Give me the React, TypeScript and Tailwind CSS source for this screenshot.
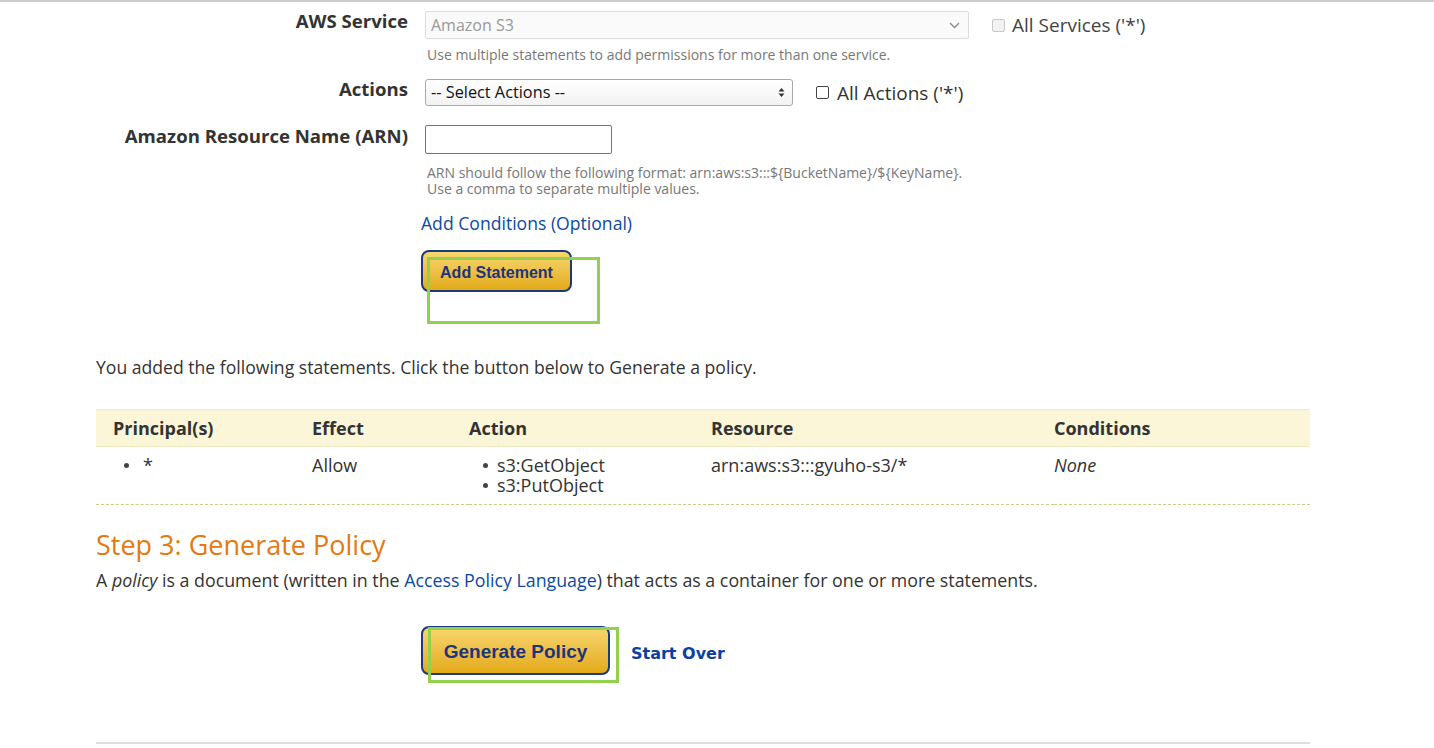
import React from 'react';

const FONT = "font-['Open_Sans',sans-serif]";
const BTN_FONT = "font-['Liberation_Sans',Arial,sans-serif]";

function Checkbox({ disabled }: { disabled?: boolean }) {
  return (
    <span
      className={`inline-block w-[13px] h-[13px] rounded-[2px] border ${
        disabled ? 'border-[#c8c8c8] bg-[#f2f2f2]' : 'border-[#444] bg-white'
      }`}
    />
  );
}

function HelpText({ children }: { children: React.ReactNode }) {
  return <div className="text-[14px] leading-[16px] text-[#777] pl-[2px]">{children}</div>;
}

export default function App() {
  return (
    <div className={`min-h-screen bg-white border-t-2 border-[#cccccc] text-[#333] ${FONT}`}>
      <div className="ml-[96px] w-[1214px] relative">
        {/* statement form */}
        <div className="grid grid-cols-[312px_1fr] gap-x-[17px] pt-[9px]">
          <div className="text-right text-[18.6px] font-bold leading-[20px] text-[#333]">AWS Service</div>
          <div>
            <div className="flex items-center">
              <div className="w-[544px] h-[28px] border border-[#dcdcdc] rounded-[2px] bg-[#fafafa] flex items-center justify-between pl-[5px] pr-[8px]">
                <span className="text-[16px] text-[#999]">Amazon S3</span>
                <svg width="11" height="7" viewBox="0 0 11 7">
                  <path d="M1 1l4.5 4.5L10 1" fill="none" stroke="#888" strokeWidth="1.3" />
                </svg>
              </div>
              <div className="flex items-center ml-[23px] gap-[7px]">
                <Checkbox disabled />
                <span className="text-[19px] leading-[24px] text-[#444]">All Services ('*')</span>
              </div>
            </div>
            <div className="mt-[8px]">
              <HelpText>Use multiple statements to add permissions for more than one service.</HelpText>
            </div>
          </div>

          <div className="text-right text-[18.6px] font-bold leading-[20px] mt-[16px] text-[#333]">Actions</div>
          <div className="mt-[16px]">
            <div className="flex items-center">
              <div className="w-[368px] h-[27px] border border-[#a9a9a9] rounded-[3px] bg-gradient-to-b from-white to-[#f2f2f2] flex items-center justify-between pl-[5px] pr-[7px]">
                <span className="text-[16.3px] text-[#111]">-- Select Actions --</span>
                <svg width="7" height="11" viewBox="0 0 7 11">
                  <path d="M0.5 4.5L3.5 1l3 3.5z M0.5 6.5L3.5 10l3-3.5z" fill="#333" />
                </svg>
              </div>
              <div className="flex items-center ml-[23px] gap-[8px]">
                <Checkbox />
                <span className="text-[19px] leading-[24px] text-[#333]">All Actions ('*')</span>
              </div>
            </div>
          </div>

          <div className="text-right text-[18.6px] font-bold leading-[20px] mt-[20px] text-[#333]">
            Amazon Resource Name (ARN)
          </div>
          <div className="mt-[19px]">
            <div className="w-[187px] h-[29px] border border-[#767676] rounded-[2px] bg-white" />
            <div className="mt-[11px]">
              <HelpText>
                ARN should follow the following format: arn:aws:s3:::${'{'}BucketName{'}'}/${'{'}KeyName{'}'}.
                <br />
                Use a comma to separate multiple values.
              </HelpText>
            </div>
            <div className="mt-[15px] -ml-[4px] text-[17.6px] leading-[22px] text-[#0b4aa2]">Add Conditions (Optional)</div>
            <div className="mt-[16px] -ml-[4px] relative w-[180px] h-[74px]">
              <button
                className={`w-[151px] h-[42px] pt-[3px] rounded-[8px] border-2 border-[#1c3a7f] bg-gradient-to-b from-[#f8d66b] to-[#e3aa0e] text-[#1d347a] text-[16px] font-bold ${BTN_FONT}`}
              >
                Add Statement
              </button>
              <div className="absolute left-[6px] top-[7px] w-[173px] h-[67px] border-[3px] border-[#92d050]" />
            </div>
          </div>
        </div>

        <p className="mt-[32px] text-[17.6px] leading-[22px] text-[#333]">
          You added the following statements. Click the button below to Generate a policy.
        </p>

        {/* statements table */}
        <table className="mt-[31px] w-full border-collapse">
          <thead>
            <tr className="bg-[#faf6d7] border-t border-[#f0ecc8] border-b border-b-[#ece8c2]">
              <th className="text-left font-bold text-[18px] leading-[22px] h-[37px] pl-[17px] w-[216px] text-[#333]">Principal(s)</th>
              <th className="text-left font-bold text-[18px] leading-[22px] w-[157px] text-[#333]">Effect</th>
              <th className="text-left font-bold text-[18px] leading-[22px] w-[242px] text-[#333]">Action</th>
              <th className="text-left font-bold text-[18px] leading-[22px] w-[343px] text-[#333]">Resource</th>
              <th className="text-left font-bold text-[18px] leading-[22px] text-[#333]">Conditions</th>
            </tr>
          </thead>
          <tbody className="text-[18px]">
            <tr className="border-b border-dashed border-[#c9cc88] align-top">
              <td className="pl-[28px] pt-[8px] h-[58px]">
                <div className="flex items-center gap-[14px] leading-[20px]">
                  <span className="w-[5px] h-[5px] rounded-full bg-[#444]" />
                  <span>*</span>
                </div>
              </td>
              <td className="pt-[8px] leading-[20px]">Allow</td>
              <td className="pt-[8px] pl-[14px]">
                {['s3:GetObject', 's3:PutObject'].map(a => (
                  <div key={a} className="flex items-center gap-[9px] leading-[20px]">
                    <span className="w-[5px] h-[5px] rounded-full bg-[#444]" />
                    <span>{a}</span>
                  </div>
                ))}
              </td>
              <td className="pt-[8px] leading-[20px]">arn:aws:s3:::gyuho-s3/*</td>
              <td className="pt-[8px] leading-[20px] italic">None</td>
            </tr>
          </tbody>
        </table>

        <h2 className="mt-[24px] text-[27px] leading-[32px] text-[#e47911]">Step 3: Generate Policy</h2>
        <p className="mt-[8px] text-[17.8px] leading-[22px] text-[#333]">
          A <em>policy</em> is a document (written in the{' '}
          <span className="text-[#0b4aa2]">Access Policy Language</span>) that acts as a container for one or more
          statements.
        </p>

        <div className="mt-[35px] ml-[325px] flex items-start">
          <div className="relative w-[198px] h-[57px]">
            <button
              className={`w-[189px] h-[49px] pt-[4px] rounded-[8px] border-2 border-[#1c3a7f] bg-gradient-to-b from-[#f8d66b] to-[#e3aa0e] text-[#1d347a] text-[19px] font-bold ${BTN_FONT}`}
            >
              Generate Policy
            </button>
            <div className="absolute left-[7px] top-[1px] w-[191px] h-[56px] border-[3px] border-[#92d050]" />
          </div>
          <span className="ml-[12px] mt-[16px] text-[16px] font-bold text-[#0b3fa0] font-['DejaVu_Sans',Verdana,sans-serif]">
            Start Over
          </span>
        </div>

        <div className="mt-[59px] h-[2px] bg-[#dddddd]" />
      </div>
    </div>
  );
}
